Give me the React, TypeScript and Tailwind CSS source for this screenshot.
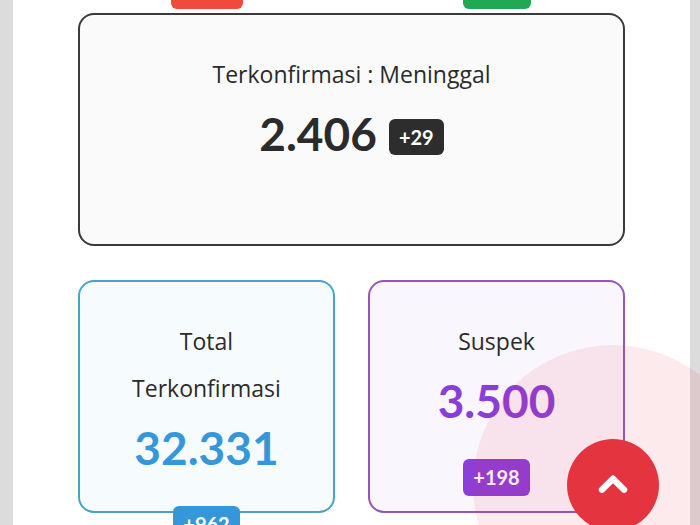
const numFont = { fontFamily: "Lato, 'Open Sans', sans-serif" };
const titleFont = "font-['Open_Sans',_sans-serif] font-medium";

type Stat = {
  title: string[];
  value: string;
  delta: string;
  border: string;
  bg: string;
  valueColor: string;
  badge: string;
  badgeW?: string;
};

// cards of the row above, scrolled out of view: only their badges peek in
const hidden: Stat[] = [
  {
    title: ["", ""],
    value: "",
    delta: "",
    border: "border-[#e74c3c]",
    bg: "bg-[#fff6f5]",
    valueColor: "text-[#e74c3c]",
    badge: "bg-[#f0493e]",
    badgeW: "w-[72px]",
  },
  {
    title: ["", ""],
    value: "",
    delta: "",
    border: "border-[#27ae60]",
    bg: "bg-[#f5fdf8]",
    valueColor: "text-[#27ae60]",
    badge: "bg-[#21a852]",
    badgeW: "w-[68px]",
  },
];

const stats: Stat[] = [
  {
    title: ["Total", "Terkonfirmasi"],
    value: "32.331",
    delta: "+962",
    border: "border-[#4aa3c6]",
    bg: "bg-[#f6fbfe]",
    valueColor: "text-[#3597da]",
    badge: "bg-[#3597da]",
  },
  {
    title: ["Suspek"],
    value: "3.500",
    delta: "+198",
    border: "border-[#9257b8]",
    bg: "bg-[#faf6fd]",
    valueColor: "text-[#8a3ed8]",
    badge: "bg-[#8c3fd8]",
  },
];

function StatCard({ s }: { s: Stat }) {
  return (
    <div
      className={`h-[233px] rounded-[16px] border-2 ${s.border} ${s.bg} pt-[36px] flex flex-col items-center`}
    >
      {s.title.map((t, i) => (
        <div
          key={i}
          className={`h-[47px] shrink-0 leading-[47px] text-[23px] text-[#2b2b2b] ${titleFont}`}
        >
          {t}
        </div>
      ))}
      <div className={`h-[72px] shrink-0 leading-[72px] text-[46px] font-bold ${s.valueColor}`}>
        {s.value}
      </div>
      <div
        className={`mt-[22px] h-[37px] shrink-0 px-[10px] rounded-[6px] ${s.badge} ${s.badgeW ?? ""} text-center text-white text-[20px] font-bold leading-[37px]`}
      >
        {s.delta}
      </div>
    </div>
  );
}

export default function App() {
  return (
    <div className="relative h-[525px] w-[700px] overflow-hidden bg-[#dcdcdc]" style={numFont}>
      <div className="ml-[13px] mr-[10px] flow-root h-full overflow-hidden bg-white">
        <div className="-mt-[254px] px-[65px] grid grid-cols-2 gap-x-[33px] gap-y-[34px]">
          {hidden.map((s, i) => (
            <StatCard key={i} s={s} />
          ))}
          <div className="col-span-2 h-[233px] rounded-[16px] border-2 border-[#3a3a3a] bg-[#fafafa] pt-[36px] flex flex-col items-center">
            <div className={`h-[47px] leading-[47px] text-[23px] text-[#2b2b2b] ${titleFont}`}>
              Terkonfirmasi : Meninggal
            </div>
            <div className="h-[72px] flex items-center gap-[12px]">
              <span className="text-[46px] font-bold text-[#2b2b2b] leading-none">2.406</span>
              <span className="mt-[6px] h-[36px] px-[10px] rounded-[6px] bg-[#2d2d2d] text-white text-[20px] font-bold leading-[36px]">
                +29
              </span>
            </div>
          </div>
          {stats.map((s) => (
            <StatCard key={s.value} s={s} />
          ))}
        </div>
      </div>

      <div className="absolute left-[473px] top-[345px] h-[280px] w-[280px] rounded-full bg-[#e8304a]/10" />
      <button className="absolute left-[567px] top-[439px] flex h-[92px] w-[92px] items-center justify-center rounded-full bg-[#e3343f]">
        <svg width="38" height="38" viewBox="0 0 24 24" fill="none" stroke="white" strokeWidth="4" strokeLinecap="round" strokeLinejoin="round">
          <path d="M5 15l7-7 7 7" />
        </svg>
      </button>
    </div>
  );
}
